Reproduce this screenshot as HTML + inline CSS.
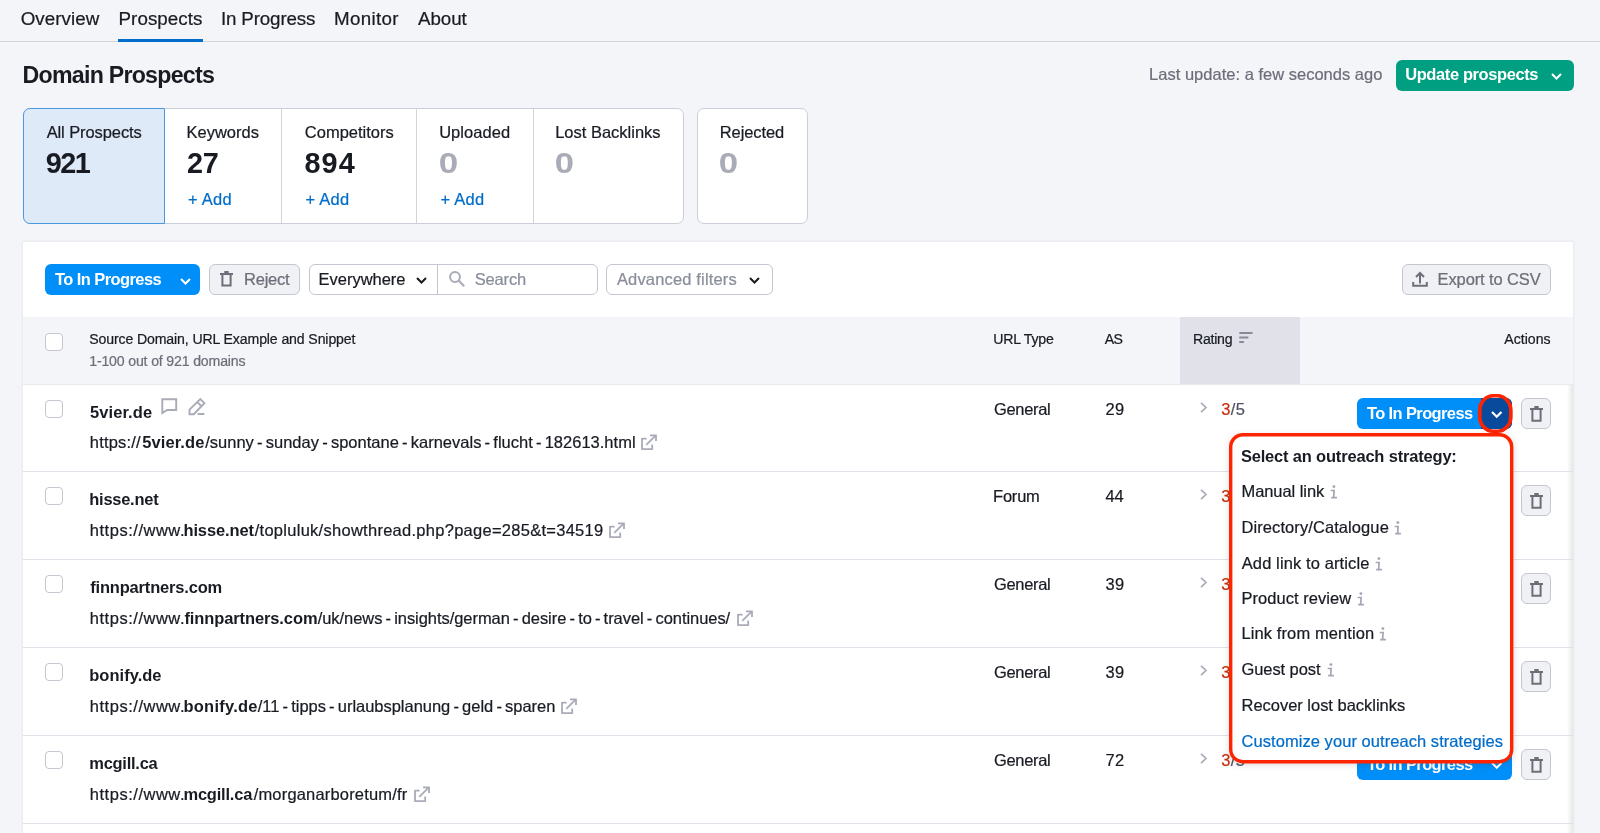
<!DOCTYPE html>
<html lang="en"><head><meta charset="utf-8"><title>Domain Prospects</title>
<style>
*{box-sizing:border-box;margin:0;padding:0}
html,body{width:1600px;height:833px;overflow:hidden;background:#f4f5f9}
body{position:relative;font-family:"Liberation Sans",Arial,sans-serif;color:#191b23}
.t{position:absolute;white-space:nowrap;display:block;-webkit-text-stroke:0.22px currentColor}
.t i{font-style:normal;margin:0 3.2px}
.a{position:absolute;display:block}
svg{position:absolute;overflow:visible}
.cb{position:absolute;width:18px;height:18px;border:1px solid #c4c7cf;border-radius:4px;background:#fff}
.rl{position:absolute;left:23px;width:1550px;height:1px;background:#e0e1e9}
.bp{position:absolute;left:1357px;width:155px;height:30.8px;border-radius:6px;background:#008ff8;z-index:1}
.bt{position:absolute;left:1521px;width:30px;height:30.6px;border:1px solid #c4c7cf;border-radius:6px;background:#f0f1f4}
#w{position:absolute;left:0;top:0;width:1600px;height:833px;will-change:transform}
</style></head><body><div id="w">
<!-- nav -->
<div class="a" style="left:0;top:41px;width:1600px;height:1px;background:#d1d4db"></div>
<div class="a" style="left:118px;top:38.5px;width:85px;height:3px;background:#006dca"></div>
<!-- green button -->
<div class="a" style="left:1396px;top:59.5px;width:177.5px;height:31px;border-radius:6px;background:#009f81"></div>
<svg style="left:1551px;top:73px" width="11" height="7" viewBox="0 0 11 7"><path d="M1 1l4.5 4.5L10 1" fill="none" stroke="#fff" stroke-width="2"/></svg>
<!-- cards -->
<div class="a" style="left:23px;top:108px;width:661px;height:116px;border:1px solid #cbced6;border-radius:7px;background:#fff"></div>
<div class="a" style="left:281px;top:109px;width:1px;height:114px;background:#d1d4db"></div>
<div class="a" style="left:416px;top:109px;width:1px;height:114px;background:#d1d4db"></div>
<div class="a" style="left:533px;top:109px;width:1px;height:114px;background:#d1d4db"></div>
<div class="a" style="left:23px;top:108px;width:142px;height:116px;border:1px solid #4b97e0;border-radius:7px 0 0 7px;background:#dfeaf8"></div>
<div class="a" style="left:697px;top:108px;width:110.5px;height:116px;border:1px solid #cbced6;border-radius:7px;background:#fff"></div>
<!-- panel -->
<div class="a" style="left:23px;top:242px;width:1550px;height:600px;background:#fff;box-shadow:0 0 2px 1px rgba(25,27,35,.05)"></div>
<!-- toolbar -->
<div class="a" style="left:45px;top:264px;width:155px;height:31px;border-radius:6px;background:#008ff8"></div>
<svg style="left:180px;top:277.5px" width="11" height="7" viewBox="0 0 11 7"><path d="M1 1l4.5 4.5L10 1" fill="none" stroke="#fff" stroke-width="2"/></svg>
<div class="a" style="left:209px;top:264px;width:91px;height:31px;border:1px solid #c4c7cf;border-radius:6px;background:#f0f1f4"></div>
<svg style="left:220px;top:271px" width="13" height="16" viewBox="0 0 13 16"><path d="M0 2h13v2H0zM4.3 0h4.4v2H4.3z" fill="#6c6e79"/><path d="M2.4 4v10.5h8.2V4" fill="none" stroke="#6c6e79" stroke-width="2"/></svg>
<div class="a" style="left:308.5px;top:264px;width:289.5px;height:31px;border:1px solid #c4c7cf;border-radius:6px;background:#fff"></div>
<div class="a" style="left:437px;top:264px;width:1px;height:31px;background:#c4c7cf"></div>
<svg style="left:416px;top:277px" width="11" height="7" viewBox="0 0 11 7"><path d="M1 1l4.5 4.5L10 1" fill="none" stroke="#191b23" stroke-width="2"/></svg>
<svg style="left:449px;top:271px" width="16" height="16" viewBox="0 0 16 16"><circle cx="6" cy="6" r="4.9" fill="none" stroke="#a9abb6" stroke-width="2"/><path d="M9.6 9.6l5.6 5.6" stroke="#a9abb6" stroke-width="2.1"/></svg>
<div class="a" style="left:606px;top:264px;width:167px;height:31px;border:1px solid #c4c7cf;border-radius:6px;background:#fff"></div>
<svg style="left:749px;top:277px" width="11" height="7" viewBox="0 0 11 7"><path d="M1 1l4.5 4.5L10 1" fill="none" stroke="#191b23" stroke-width="2"/></svg>
<div class="a" style="left:1402px;top:264px;width:149px;height:31px;border:1px solid #c4c7cf;border-radius:6px;background:#f0f1f4"></div>
<svg style="left:1412px;top:272px" width="16" height="15" viewBox="0 0 16 15"><path d="M1.2 10v3.8h13.6V10" fill="none" stroke="#6c6e79" stroke-width="2"/><path d="M8 11.5V1.5M4 5l4-4 4 4" fill="none" stroke="#6c6e79" stroke-width="2"/></svg>
<!-- table header -->
<div class="a" style="left:23px;top:317px;width:1550px;height:67px;background:#f4f5f9"></div>
<div class="a" style="left:1180px;top:317px;width:120px;height:67px;background:#e0e1e9"></div>
<div class="rl" style="top:384px;background:#e9eaf0"></div>
<div class="cb" style="left:45px;top:332.5px"></div>
<svg style="left:1239.3px;top:331.8px" width="14" height="11" viewBox="0 0 14 11"><path d="M1 1h11.8M1 5.5h7.6M1 10h3.2" fill="none" stroke="#878a99" stroke-width="1.9" stroke-linecap="round"/></svg>
<div class="a" style="left:1567px;top:385px;width:6px;height:448px;background:linear-gradient(to right,rgba(25,27,35,0),rgba(25,27,35,.11))"></div>
<div class="cb" style="left:45px;top:400px"></div>
<div class="rl" style="top:471px"></div>
<svg style="left:1199.5px;top:401.5px" width="8" height="11" viewBox="0 0 8 11"><path d="M1 0.8l5 4.7-5 4.7" fill="none" stroke="#a9abb6" stroke-width="1.7"/></svg>
<div class="bp" style="top:398px"></div>
<svg style="left:1491.2px;top:411.2px;z-index:2" width="11.5" height="7.4" viewBox="0 0 11 7"><path d="M1 1l4.5 4.5L10 1" fill="none" stroke="#fff" stroke-width="2.1"/></svg>
<div class="bt" style="top:398px"></div>
<svg style="left:1529.8px;top:406px" width="13" height="16" viewBox="0 0 13 16"><path d="M0 2h13v2H0zM4.3 0h4.4v2H4.3z" fill="#6c6e79"/><path d="M2.4 4v10.7h8.2V4" fill="none" stroke="#6c6e79" stroke-width="2"/></svg>
<svg style="left:641px;top:433.5px" width="16" height="16" viewBox="0 0 16 16"><path d="M5.6 4.7H1v10.4h10.2v-4.5" fill="none" stroke="#a9abb6" stroke-width="1.8" stroke-linejoin="round"/><path d="M5.3 10.8L14.8 1.4M9 1.3h6V7.1" fill="none" stroke="#a9abb6" stroke-width="1.8"/></svg>
<div class="cb" style="left:45px;top:487.2px"></div>
<div class="rl" style="top:559px"></div>
<svg style="left:1199.5px;top:488.7px" width="8" height="11" viewBox="0 0 8 11"><path d="M1 0.8l5 4.7-5 4.7" fill="none" stroke="#a9abb6" stroke-width="1.7"/></svg>
<div class="bp" style="top:485.2px"></div>
<svg style="left:1491.2px;top:498.4px;z-index:2" width="11.5" height="7.4" viewBox="0 0 11 7"><path d="M1 1l4.5 4.5L10 1" fill="none" stroke="#fff" stroke-width="2.1"/></svg>
<div class="bt" style="top:485.2px"></div>
<svg style="left:1529.8px;top:493.2px" width="13" height="16" viewBox="0 0 13 16"><path d="M0 2h13v2H0zM4.3 0h4.4v2H4.3z" fill="#6c6e79"/><path d="M2.4 4v10.7h8.2V4" fill="none" stroke="#6c6e79" stroke-width="2"/></svg>
<svg style="left:609px;top:521.5px" width="16" height="16" viewBox="0 0 16 16"><path d="M5.6 4.7H1v10.4h10.2v-4.5" fill="none" stroke="#a9abb6" stroke-width="1.8" stroke-linejoin="round"/><path d="M5.3 10.8L14.8 1.4M9 1.3h6V7.1" fill="none" stroke="#a9abb6" stroke-width="1.8"/></svg>
<div class="cb" style="left:45px;top:575.2px"></div>
<div class="rl" style="top:647px"></div>
<svg style="left:1199.5px;top:576.7px" width="8" height="11" viewBox="0 0 8 11"><path d="M1 0.8l5 4.7-5 4.7" fill="none" stroke="#a9abb6" stroke-width="1.7"/></svg>
<div class="bp" style="top:573.2px"></div>
<svg style="left:1491.2px;top:586.4000000000001px;z-index:2" width="11.5" height="7.4" viewBox="0 0 11 7"><path d="M1 1l4.5 4.5L10 1" fill="none" stroke="#fff" stroke-width="2.1"/></svg>
<div class="bt" style="top:573.2px"></div>
<svg style="left:1529.8px;top:581.2px" width="13" height="16" viewBox="0 0 13 16"><path d="M0 2h13v2H0zM4.3 0h4.4v2H4.3z" fill="#6c6e79"/><path d="M2.4 4v10.7h8.2V4" fill="none" stroke="#6c6e79" stroke-width="2"/></svg>
<svg style="left:737px;top:609.5px" width="16" height="16" viewBox="0 0 16 16"><path d="M5.6 4.7H1v10.4h10.2v-4.5" fill="none" stroke="#a9abb6" stroke-width="1.8" stroke-linejoin="round"/><path d="M5.3 10.8L14.8 1.4M9 1.3h6V7.1" fill="none" stroke="#a9abb6" stroke-width="1.8"/></svg>
<div class="cb" style="left:45px;top:663.2px"></div>
<div class="rl" style="top:735px"></div>
<svg style="left:1199.5px;top:664.7px" width="8" height="11" viewBox="0 0 8 11"><path d="M1 0.8l5 4.7-5 4.7" fill="none" stroke="#a9abb6" stroke-width="1.7"/></svg>
<div class="bp" style="top:661.2px"></div>
<svg style="left:1491.2px;top:674.4000000000001px;z-index:2" width="11.5" height="7.4" viewBox="0 0 11 7"><path d="M1 1l4.5 4.5L10 1" fill="none" stroke="#fff" stroke-width="2.1"/></svg>
<div class="bt" style="top:661.2px"></div>
<svg style="left:1529.8px;top:669.2px" width="13" height="16" viewBox="0 0 13 16"><path d="M0 2h13v2H0zM4.3 0h4.4v2H4.3z" fill="#6c6e79"/><path d="M2.4 4v10.7h8.2V4" fill="none" stroke="#6c6e79" stroke-width="2"/></svg>
<svg style="left:560.5px;top:697.5px" width="16" height="16" viewBox="0 0 16 16"><path d="M5.6 4.7H1v10.4h10.2v-4.5" fill="none" stroke="#a9abb6" stroke-width="1.8" stroke-linejoin="round"/><path d="M5.3 10.8L14.8 1.4M9 1.3h6V7.1" fill="none" stroke="#a9abb6" stroke-width="1.8"/></svg>
<div class="cb" style="left:45px;top:751.2px"></div>
<div class="rl" style="top:823px"></div>
<svg style="left:1199.5px;top:752.7px" width="8" height="11" viewBox="0 0 8 11"><path d="M1 0.8l5 4.7-5 4.7" fill="none" stroke="#a9abb6" stroke-width="1.7"/></svg>
<div class="bp" style="top:749.2px"></div>
<svg style="left:1491.2px;top:762.4000000000001px;z-index:2" width="11.5" height="7.4" viewBox="0 0 11 7"><path d="M1 1l4.5 4.5L10 1" fill="none" stroke="#fff" stroke-width="2.1"/></svg>
<div class="bt" style="top:749.2px"></div>
<svg style="left:1529.8px;top:757.2px" width="13" height="16" viewBox="0 0 13 16"><path d="M0 2h13v2H0zM4.3 0h4.4v2H4.3z" fill="#6c6e79"/><path d="M2.4 4v10.7h8.2V4" fill="none" stroke="#6c6e79" stroke-width="2"/></svg>
<svg style="left:413.5px;top:785.5px" width="16" height="16" viewBox="0 0 16 16"><path d="M5.6 4.7H1v10.4h10.2v-4.5" fill="none" stroke="#a9abb6" stroke-width="1.8" stroke-linejoin="round"/><path d="M5.3 10.8L14.8 1.4M9 1.3h6V7.1" fill="none" stroke="#a9abb6" stroke-width="1.8"/></svg>
<svg style="left:161.4px;top:397.5px" width="17" height="18" viewBox="0 0 17 18"><path d="M1.3 1.3h13.9v10.7H6.2L1.3 15z" fill="none" stroke="#a9abb6" stroke-width="1.9" stroke-linejoin="miter"/></svg>
<svg style="left:187.5px;top:397.5px" width="18" height="18" viewBox="0 0 18 18"><path d="M1.5 16.2v-4.6L12.3 1.1l4.1 4.1L5.8 16.2zM9.3 4.1l4.4 4.4" fill="none" stroke="#a9abb6" stroke-width="1.9"/><path d="M10.3 16h5.3" fill="none" stroke="#a9abb6" stroke-width="1.8" stroke-linecap="round"/></svg>
<div class="a" style="left:1481px;top:398px;width:31px;height:31px;background:#0a4a9c;border-radius:0 6px 6px 0;z-index:1"></div>
<svg style="left:1477.8px;top:394.2px;z-index:2" width="34.6" height="39" viewBox="0 0 34.6 39"><rect x="1.75" y="1.75" width="31.1" height="35.5" rx="13.5" ry="14.5" fill="none" stroke="#ff2400" stroke-width="3.7"/></svg>
<div class="a" style="left:1232px;top:436px;width:279px;height:324px;background:#fff;border-radius:8px;box-shadow:0 2px 10px rgba(25,27,35,.28);z-index:2"></div>
<svg style="left:1228.7px;top:433.2px;z-index:3" width="284.4" height="330.4" viewBox="0 0 284.4 330.4"><rect x="1.7" y="1.7" width="281" height="327" rx="12.3" fill="none" stroke="#ff2400" stroke-width="3.4"/></svg>
<svg style="left:1330.0px;top:485.1px;z-index:3" width="8" height="14" viewBox="0 0 8 14"><circle cx="3.9" cy="1.6" r="1.45" fill="#a3a6b3"/><path d="M0.7 5.5h3.4L3.6 12.7M1.2 12.7h5.7" fill="none" stroke="#a3a6b3" stroke-width="1.7"/></svg>
<svg style="left:1394.1px;top:521.1px;z-index:3" width="8" height="14" viewBox="0 0 8 14"><circle cx="3.9" cy="1.6" r="1.45" fill="#a3a6b3"/><path d="M0.7 5.5h3.4L3.6 12.7M1.2 12.7h5.7" fill="none" stroke="#a3a6b3" stroke-width="1.7"/></svg>
<svg style="left:1375.1px;top:557.1px;z-index:3" width="8" height="14" viewBox="0 0 8 14"><circle cx="3.9" cy="1.6" r="1.45" fill="#a3a6b3"/><path d="M0.7 5.5h3.4L3.6 12.7M1.2 12.7h5.7" fill="none" stroke="#a3a6b3" stroke-width="1.7"/></svg>
<svg style="left:1357.1px;top:592.1px;z-index:3" width="8" height="14" viewBox="0 0 8 14"><circle cx="3.9" cy="1.6" r="1.45" fill="#a3a6b3"/><path d="M0.7 5.5h3.4L3.6 12.7M1.2 12.7h5.7" fill="none" stroke="#a3a6b3" stroke-width="1.7"/></svg>
<svg style="left:1379.1px;top:627.1px;z-index:3" width="8" height="14" viewBox="0 0 8 14"><circle cx="3.9" cy="1.6" r="1.45" fill="#a3a6b3"/><path d="M0.7 5.5h3.4L3.6 12.7M1.2 12.7h5.7" fill="none" stroke="#a3a6b3" stroke-width="1.7"/></svg>
<svg style="left:1326.6px;top:663.1px;z-index:3" width="8" height="14" viewBox="0 0 8 14"><circle cx="3.9" cy="1.6" r="1.45" fill="#a3a6b3"/><path d="M0.7 5.5h3.4L3.6 12.7M1.2 12.7h5.7" fill="none" stroke="#a3a6b3" stroke-width="1.7"/></svg>
<span class="t" style="left:20.70px;top:10px;font-size:18.75px;line-height:18.75px;letter-spacing:0.068px">Overview</span>
<span class="t" style="left:118.52px;top:10px;font-size:18.75px;line-height:18.75px;letter-spacing:0.072px">Prospects</span>
<span class="t" style="left:220.94px;top:10px;font-size:18.75px;line-height:18.75px;letter-spacing:-0.144px">In Progress</span>
<span class="t" style="left:334.02px;top:10px;font-size:18.75px;line-height:18.75px;letter-spacing:0.320px">Monitor</span>
<span class="t" style="left:417.95px;top:10px;font-size:18.75px;line-height:18.75px;letter-spacing:-0.033px">About</span>
<span class="t" style="left:22.55px;top:64px;font-size:23.18px;line-height:23.18px;letter-spacing:-0.746px;font-weight:700;-webkit-text-stroke:0">Domain Prospects</span>
<span class="t" style="left:1149.10px;top:66px;font-size:16.48px;line-height:16.48px;letter-spacing:0.024px;color:#6c6e79">Last update: a few seconds ago</span>
<span class="t" style="left:1405.20px;top:66px;font-size:16.48px;line-height:16.48px;letter-spacing:-0.384px;font-weight:700;-webkit-text-stroke:0;color:#fff">Update prospects</span>
<span class="t" style="left:46.65px;top:124px;font-size:16.48px;line-height:16.48px;letter-spacing:-0.081px">All Prospects</span>
<span class="t" style="left:45.80px;top:149px;font-size:28.84px;line-height:28.84px;letter-spacing:-1.582px;font-weight:700;-webkit-text-stroke:0">921</span>
<span class="t" style="left:186.60px;top:124px;font-size:16.48px;line-height:16.48px;letter-spacing:-0.003px">Keywords</span>
<span class="t" style="left:187.00px;top:149px;font-size:28.84px;line-height:28.84px;letter-spacing:-0.328px;font-weight:700;-webkit-text-stroke:0">27</span>
<span class="t" style="left:187.91px;top:191px;font-size:16.48px;line-height:16.48px;letter-spacing:0.290px;color:#006dca">+ Add</span>
<span class="t" style="left:304.87px;top:124px;font-size:16.48px;line-height:16.48px;letter-spacing:0.014px">Competitors</span>
<span class="t" style="left:304.50px;top:149px;font-size:28.84px;line-height:28.84px;letter-spacing:1.056px;font-weight:700;-webkit-text-stroke:0">894</span>
<span class="t" style="left:305.41px;top:191px;font-size:16.48px;line-height:16.48px;letter-spacing:0.290px;color:#006dca">+ Add</span>
<span class="t" style="left:439.13px;top:124px;font-size:16.48px;line-height:16.48px;letter-spacing:0.085px">Uploaded</span>
<span class="t" style="left:438.56px;top:149px;font-size:28.84px;line-height:28.84px;letter-spacing:0.000px;font-weight:700;-webkit-text-stroke:0;color:#a9abb6;transform:scaleX(1.216);transform-origin:1.04px 0">0</span>
<span class="t" style="left:440.41px;top:191px;font-size:16.48px;line-height:16.48px;letter-spacing:0.290px;color:#006dca">+ Add</span>
<span class="t" style="left:555.20px;top:124px;font-size:16.48px;line-height:16.48px;letter-spacing:0.007px">Lost Backlinks</span>
<span class="t" style="left:554.76px;top:149px;font-size:28.84px;line-height:28.84px;letter-spacing:0.000px;font-weight:700;-webkit-text-stroke:0;color:#a9abb6;transform:scaleX(1.202);transform-origin:1.04px 0">0</span>
<span class="t" style="left:719.80px;top:124px;font-size:16.48px;line-height:16.48px;letter-spacing:-0.082px">Rejected</span>
<span class="t" style="left:719.16px;top:149px;font-size:28.84px;line-height:28.84px;letter-spacing:0.000px;font-weight:700;-webkit-text-stroke:0;color:#a9abb6;transform:scaleX(1.209);transform-origin:1.04px 0">0</span>
<span class="t" style="left:54.94px;top:271px;font-size:16.48px;line-height:16.48px;letter-spacing:-0.568px;font-weight:700;-webkit-text-stroke:0;color:#fff">To In Progress</span>
<span class="t" style="left:244.10px;top:271px;font-size:16.48px;line-height:16.48px;letter-spacing:-0.256px;color:#6c6e79">Reject</span>
<span class="t" style="left:318.60px;top:271px;font-size:16.48px;line-height:16.48px;letter-spacing:-0.004px">Everywhere</span>
<span class="t" style="left:474.70px;top:271px;font-size:16.48px;line-height:16.48px;letter-spacing:-0.135px;color:#8a8e9b">Search</span>
<span class="t" style="left:616.95px;top:271px;font-size:16.48px;line-height:16.48px;letter-spacing:0.173px;color:#8a8e9b">Advanced filters</span>
<span class="t" style="left:1437.60px;top:271px;font-size:16.48px;line-height:16.48px;letter-spacing:-0.108px;color:#6c6e79">Export to CSV</span>
<span class="t" style="left:89.19px;top:332px;font-size:14.11px;line-height:14.11px;letter-spacing:-0.123px">Source Domain, URL Example and Snippet</span>
<span class="t" style="left:89.20px;top:354px;font-size:14.11px;line-height:14.11px;letter-spacing:-0.159px;color:#6c6e79">1-100 out of 921 domains</span>
<span class="t" style="left:993.20px;top:332px;font-size:14.11px;line-height:14.11px;letter-spacing:-0.187px">URL Type</span>
<span class="t" style="left:1104.85px;top:332px;font-size:14.11px;line-height:14.11px;letter-spacing:-0.878px">AS</span>
<span class="t" style="left:1193.08px;top:332px;font-size:14.11px;line-height:14.11px;letter-spacing:-0.264px">Rating</span>
<span class="t" style="left:1504.25px;top:332px;font-size:14.11px;line-height:14.11px;letter-spacing:0.014px">Actions</span>
<span class="t" style="left:89.98px;top:404px;font-size:16.48px;line-height:16.48px;letter-spacing:0.108px;font-weight:700;-webkit-text-stroke:0">5vier.de</span>
<span class="t" style="left:89.79px;top:434px;font-size:16.48px;line-height:16.48px;letter-spacing:0.185px">https://</span>
<span class="t" style="left:142.18px;top:434px;font-size:16.48px;line-height:16.48px;letter-spacing:0.126px;font-weight:700;-webkit-text-stroke:0">5vier.de</span>
<span class="t" style="left:205.19px;top:434px;font-size:16.48px;line-height:16.48px;letter-spacing:0.022px">/sunny<i>-</i>sunday<i>-</i>spontane<i>-</i>karnevals<i>-</i>flucht<i>-</i>182613.html</span>
<span class="t" style="left:993.88px;top:401px;font-size:16.48px;line-height:16.48px;letter-spacing:-0.291px">General</span>
<span class="t" style="left:1105.40px;top:401px;font-size:16.48px;line-height:16.48px;letter-spacing:0.485px">29</span>
<span class="t" style="left:1221.19px;top:401px;font-size:16.48px;line-height:16.48px;letter-spacing:0.372px;color:#4f5262;z-index:1"><b style="color:#c8310f;font-weight:400">3</b>/5</span>
<span class="t" style="left:1366.94px;top:405px;font-size:16.48px;line-height:16.48px;letter-spacing:-0.607px;font-weight:700;-webkit-text-stroke:0;color:#fff;z-index:1">To In Progress</span>
<span class="t" style="left:89.26px;top:491px;font-size:16.48px;line-height:16.48px;letter-spacing:-0.252px;font-weight:700;-webkit-text-stroke:0">hisse.net</span>
<span class="t" style="left:89.79px;top:522px;font-size:16.48px;line-height:16.48px;letter-spacing:0.537px">https://www.</span>
<span class="t" style="left:183.46px;top:522px;font-size:16.48px;line-height:16.48px;letter-spacing:-0.109px;font-weight:700;-webkit-text-stroke:0">hisse.net</span>
<span class="t" style="left:254.69px;top:522px;font-size:16.48px;line-height:16.48px;letter-spacing:0.287px">/topluluk/showthread.php?page=285&amp;t=34519</span>
<span class="t" style="left:993.10px;top:488px;font-size:16.48px;line-height:16.48px;letter-spacing:-0.219px">Forum</span>
<span class="t" style="left:1105.59px;top:488px;font-size:16.48px;line-height:16.48px;letter-spacing:-0.120px">44</span>
<span class="t" style="left:1221.19px;top:488px;font-size:16.48px;line-height:16.48px;letter-spacing:0.372px;color:#4f5262;z-index:1"><b style="color:#c8310f;font-weight:400">3</b>/5</span>
<span class="t" style="left:1366.94px;top:492px;font-size:16.48px;line-height:16.48px;letter-spacing:-0.607px;font-weight:700;-webkit-text-stroke:0;color:#fff;z-index:1">To In Progress</span>
<span class="t" style="left:90.19px;top:579px;font-size:16.48px;line-height:16.48px;letter-spacing:-0.166px;font-weight:700;-webkit-text-stroke:0">finnpartners.com</span>
<span class="t" style="left:89.79px;top:610px;font-size:16.48px;line-height:16.48px;letter-spacing:0.537px">https://www.</span>
<span class="t" style="left:184.39px;top:610px;font-size:16.48px;line-height:16.48px;letter-spacing:-0.090px;font-weight:700;-webkit-text-stroke:0">finnpartners.com</span>
<span class="t" style="left:317.69px;top:610px;font-size:16.48px;line-height:16.48px;letter-spacing:-0.040px">/uk/news<i>-</i>insights/german<i>-</i>desire<i>-</i>to<i>-</i>travel<i>-</i>continues/</span>
<span class="t" style="left:993.88px;top:576px;font-size:16.48px;line-height:16.48px;letter-spacing:-0.291px">General</span>
<span class="t" style="left:1105.39px;top:576px;font-size:16.48px;line-height:16.48px;letter-spacing:0.511px">39</span>
<span class="t" style="left:1221.19px;top:576px;font-size:16.48px;line-height:16.48px;letter-spacing:0.372px;color:#4f5262;z-index:1"><b style="color:#c8310f;font-weight:400">3</b>/5</span>
<span class="t" style="left:1366.94px;top:580px;font-size:16.48px;line-height:16.48px;letter-spacing:-0.607px;font-weight:700;-webkit-text-stroke:0;color:#fff;z-index:1">To In Progress</span>
<span class="t" style="left:89.28px;top:667px;font-size:16.48px;line-height:16.48px;letter-spacing:0.032px;font-weight:700;-webkit-text-stroke:0">bonify.de</span>
<span class="t" style="left:89.79px;top:698px;font-size:16.48px;line-height:16.48px;letter-spacing:0.537px">https://www.</span>
<span class="t" style="left:183.48px;top:698px;font-size:16.48px;line-height:16.48px;letter-spacing:0.258px;font-weight:700;-webkit-text-stroke:0">bonify.de</span>
<span class="t" style="left:257.69px;top:698px;font-size:16.48px;line-height:16.48px;letter-spacing:-0.012px">/11<i>-</i>tipps<i>-</i>urlaubsplanung<i>-</i>geld<i>-</i>sparen</span>
<span class="t" style="left:993.88px;top:664px;font-size:16.48px;line-height:16.48px;letter-spacing:-0.291px">General</span>
<span class="t" style="left:1105.39px;top:664px;font-size:16.48px;line-height:16.48px;letter-spacing:0.511px">39</span>
<span class="t" style="left:1221.19px;top:664px;font-size:16.48px;line-height:16.48px;letter-spacing:0.372px;color:#4f5262;z-index:1"><b style="color:#c8310f;font-weight:400">3</b>/5</span>
<span class="t" style="left:1366.94px;top:668px;font-size:16.48px;line-height:16.48px;letter-spacing:-0.607px;font-weight:700;-webkit-text-stroke:0;color:#fff;z-index:1">To In Progress</span>
<span class="t" style="left:89.28px;top:755px;font-size:16.48px;line-height:16.48px;letter-spacing:-0.255px;font-weight:700;-webkit-text-stroke:0">mcgill.ca</span>
<span class="t" style="left:89.79px;top:786px;font-size:16.48px;line-height:16.48px;letter-spacing:0.537px">https://www.</span>
<span class="t" style="left:183.48px;top:786px;font-size:16.48px;line-height:16.48px;letter-spacing:-0.201px;font-weight:700;-webkit-text-stroke:0">mcgill.ca</span>
<span class="t" style="left:253.69px;top:786px;font-size:16.48px;line-height:16.48px;letter-spacing:0.188px">/morganarboretum/fr</span>
<span class="t" style="left:993.88px;top:752px;font-size:16.48px;line-height:16.48px;letter-spacing:-0.291px">General</span>
<span class="t" style="left:1105.39px;top:752px;font-size:16.48px;line-height:16.48px;letter-spacing:0.513px">72</span>
<span class="t" style="left:1221.19px;top:752px;font-size:16.48px;line-height:16.48px;letter-spacing:0.372px;color:#4f5262;z-index:1"><b style="color:#c8310f;font-weight:400">3</b>/5</span>
<span class="t" style="left:1366.94px;top:756px;font-size:16.48px;line-height:16.48px;letter-spacing:-0.607px;font-weight:700;-webkit-text-stroke:0;color:#fff;z-index:1">To In Progress</span>
<span class="t" style="left:1240.90px;top:448px;font-size:16.48px;line-height:16.48px;letter-spacing:-0.171px;font-weight:700;-webkit-text-stroke:0;z-index:3">Select an outreach strategy:</span>
<span class="t" style="left:1241.50px;top:483px;font-size:16.48px;line-height:16.48px;letter-spacing:-0.057px;z-index:3">Manual link</span>
<span class="t" style="left:1241.50px;top:519px;font-size:16.48px;line-height:16.48px;letter-spacing:0.097px;z-index:3">Directory/Catalogue</span>
<span class="t" style="left:1241.75px;top:555px;font-size:16.48px;line-height:16.48px;letter-spacing:0.122px;z-index:3">Add link to article</span>
<span class="t" style="left:1241.50px;top:590px;font-size:16.48px;line-height:16.48px;letter-spacing:0.060px;z-index:3">Product review</span>
<span class="t" style="left:1241.50px;top:625px;font-size:16.48px;line-height:16.48px;letter-spacing:0.110px;z-index:3">Link from mention</span>
<span class="t" style="left:1241.48px;top:661px;font-size:16.48px;line-height:16.48px;letter-spacing:-0.067px;z-index:3">Guest post</span>
<span class="t" style="left:1241.50px;top:697px;font-size:16.48px;line-height:16.48px;letter-spacing:-0.007px;z-index:3">Recover lost backlinks</span>
<span class="t" style="left:1241.57px;top:733px;font-size:16.48px;line-height:16.48px;letter-spacing:0.069px;color:#006dca;z-index:3">Customize your outreach strategies</span>
</div></body></html>
